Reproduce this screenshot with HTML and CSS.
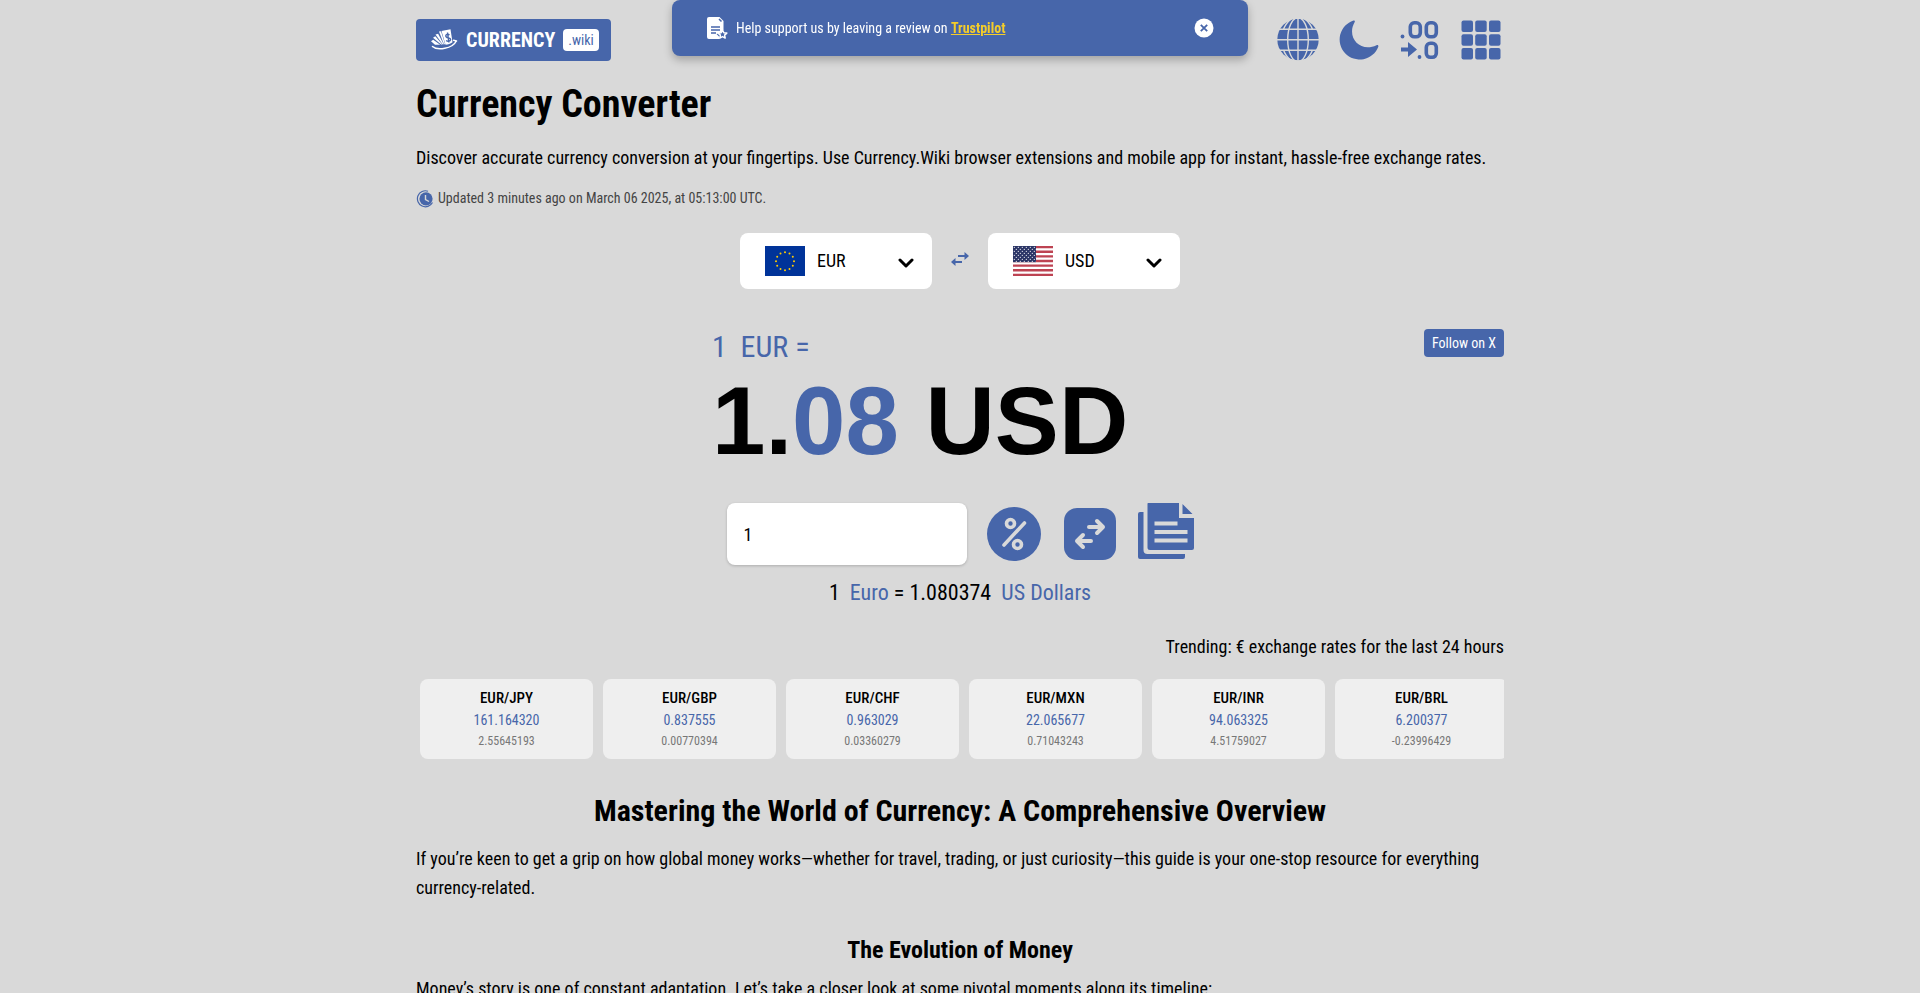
FILE: index.html
```html
<!DOCTYPE html>
<html lang="en">
<head>
<meta charset="utf-8">
<meta name="viewport" content="width=device-width, initial-scale=1">
<title>Currency Converter</title>
<link rel="stylesheet" href="styles.css">
</head>
<body>
<aside class="banner">
  <svg class="banner-icon" viewBox="0 0 22 24" aria-hidden="true"><path fill="#fff" d="M3 1h10.500l4 4v9l-1 0-2 3-4 1 3 3v2H3a2 2 0 0 1-2-2V3a2 2 0 0 1 2-2z"/><path fill="none" stroke="#4766aa" stroke-width="1.500" d="M5 11h9M5 14h9M5 17h5M13 3l2.500 2.500"/><path fill="#4766aa" stroke="#fff" stroke-width="1.500" stroke-linejoin="round" d="M16.500 14l1.300 2.700 3 .4-2.200 2 .6 3-2.700-1.500-2.700 1.500.6-3-2.200-2 3-.4z"/></svg>
  <p class="banner-text">Help support us by leaving a review on <a class="banner-link" href="#">Trustpilot</a></p>
  <button class="banner-close" type="button" aria-label="Close"><svg viewBox="0 0 20 20"><circle cx="10" cy="10" r="9.500" fill="#fff"/><path d="M6.800 6.800l6.400 6.400M13.200 6.800l-6.400 6.400" stroke="#4766aa" stroke-width="1.800"/></svg></button>
</aside>
<div class="container">
  <header class="topbar">
    <a class="logo" href="#">
      <svg class="logo-icon" viewBox="0 0 28 24" aria-hidden="true"><g fill="#fff"><path d="M11.500 3l9-1.700 2 13c-2 1.700-4.500 2.300-7 2.500z"/><path d="M9 3.500l2-.3 4 12.800-1 .6z"/><path d="M5.500 6.500l2.600-.8 5.600 10.500-1 .2z"/><path d="M3 9.800l2.300-1.500 7 8.200-1.200.1z"/><path d="M1 13.200l2.200-1.500 7 5H5z"/></g><path fill="none" stroke="#fff" stroke-width="1.500" stroke-linecap="round" d="M2.500 18.500c5 4.500 20 2 23.500-5M26.500 13l-3-.8"/><path fill="none" stroke="#4766aa" stroke-width="1.400" d="M19.500 6.800c-2.800-1.600-4.600.8-3.200 2.200s4.300.2 4.300 2.600c-.3 2-2.900 2.200-4.400.8M17.500 4.500l1.400 10"/></svg>
      <span class="logo-name">CURRENCY</span><span class="logo-tag">.wiki</span>
    </a>
    <nav class="tools" aria-label="Tools">
      <button class="tool" type="button" aria-label="Language"><svg viewBox="0 0 42 42"><circle cx="21" cy="20.500" r="20.700" fill="#4766aa"/><g fill="none" stroke="#d9d9d9" stroke-width="1.400"><path d="M21 0v42M0 20.700h42M2 10.200h38M2 31.300h38"/><ellipse cx="21" cy="20.700" rx="10.300" ry="22"/><path d="M14 0C10.500 3 8 6 6.500 10.500M28 0c3.500 3 6 6 7.500 10.500M14 41.500c-3.500-3-6-6-7.500-10.500M28 41.500c3.500-3 6-6 7.500-10.500"/></g></svg></button>
      <button class="tool" type="button" aria-label="Dark mode"><svg viewBox="0 0 42 42"><path fill="#4766aa" d="M15.500 1.500c1-.3 1.700.6 1.200 1.500C8 18 22 34 38.500 26.200c1.200-.5 2.200.3 1.800 1.500A20 20 0 1 1 15.500 1.500z"/></svg></button>
      <button class="tool" type="button" aria-label="Decimal places"><svg viewBox="0 0 42 42"><g fill="none" stroke="#4766aa" stroke-width="3.600"><rect x="11.300" y="3.800" width="10" height="14" rx="4"/><rect x="27.300" y="3.800" width="10" height="14" rx="4"/><rect x="27.300" y="24.300" width="10" height="14" rx="4"/></g><circle cx="3.500" cy="17.500" r="1.900" fill="#4766aa"/><circle cx="20.500" cy="38" r="1.900" fill="#4766aa"/><path fill="#4766aa" d="M2 28.500h7V23l9 7.500L9 38v-5.500H2z"/></svg></button>
      <button class="tool" type="button" aria-label="Menu"><svg viewBox="0 0 42 42" fill="#4766aa"><rect x="1.500" y="1.500" width="11.500" height="11.500" rx="2"/><rect x="15.200" y="1.500" width="11.500" height="11.500" rx="2"/><rect x="29" y="1.500" width="11.500" height="11.500" rx="2"/><rect x="1.500" y="15.200" width="11.500" height="11.500" rx="2"/><rect x="15.200" y="15.200" width="11.500" height="11.500" rx="2"/><rect x="29" y="15.200" width="11.500" height="11.500" rx="2"/><rect x="1.500" y="29" width="11.500" height="11.500" rx="2"/><rect x="15.200" y="29" width="11.500" height="11.500" rx="2"/><rect x="29" y="29" width="11.500" height="11.500" rx="2"/></svg></button>
    </nav>
  </header>
  <main>
    <h1 class="title">Currency Converter</h1>
    <p class="lead">Discover accurate currency conversion at your fingertips. Use Currency.Wiki browser extensions and mobile app for instant, hassle-free exchange rates.</p>
    <p class="updated"><svg class="clock" viewBox="0 0 18 18" aria-hidden="true"><circle cx="10" cy="8.800" r="6.600" fill="#4766aa"/><path fill="none" stroke="#4766aa" stroke-width="1.200" d="M12 1.200A8 8 0 1 0 16.500 12.500"/><path fill="none" stroke="#d9d9d9" stroke-width="1.400" d="M9.500 5v4.500l3.500 2"/></svg>Updated 3 minutes ago on March 06 2025, at 05:13:00 UTC.</p>

    <div class="pair">
      <button class="currency" type="button">
        <svg class="flag" viewBox="0 0 40 30" aria-hidden="true"><rect width="40" height="30" fill="#039"/><g fill="#fc0"><circle cx="20" cy="6.200" r="1"/><circle cx="24.500" cy="7.400" r="1"/><circle cx="27.800" cy="10.700" r="1"/><circle cx="29" cy="15.200" r="1"/><circle cx="27.800" cy="19.700" r="1"/><circle cx="24.500" cy="23" r="1"/><circle cx="20" cy="24.200" r="1"/><circle cx="15.500" cy="23" r="1"/><circle cx="12.200" cy="19.700" r="1"/><circle cx="11" cy="15.200" r="1"/><circle cx="12.200" cy="10.700" r="1"/><circle cx="15.500" cy="7.400" r="1"/></g></svg>
        <span class="code">EUR</span>
        <svg class="chevron" viewBox="0 0 16 14" aria-hidden="true"><path fill="none" stroke="#000" stroke-width="3" stroke-linecap="round" stroke-linejoin="round" d="M2 6l6 6 6-6"/></svg>
      </button>
      <button class="swap" type="button" aria-label="Swap currencies"><svg viewBox="0 0 18 18"><path fill="#4766aa" d="M7 3h6.500V0L18 4l-4.500 4V5H7zM11 9H4.500V6L0 10l4.500 4v-3H11z"/></svg></button>
      <button class="currency" type="button">
        <svg class="flag" viewBox="0 0 40 30" aria-hidden="true"><defs><pattern id="stars" width="4" height="4" patternUnits="userSpaceOnUse"><circle cx="1.300" cy="1.300" r=".6" fill="#fff"/><circle cx="3.300" cy="3.300" r=".6" fill="#fff"/></pattern></defs><rect width="40" height="30" fill="#fff"/><path stroke="#b22234" stroke-opacity=".85" stroke-width="2.300" d="M0 1.150h40M0 5.770h40M0 10.380h40M0 15h40M0 19.620h40M0 24.230h40M0 28.850h40"/><rect width="23" height="16.150" fill="#2b3566"/><rect width="23" height="16.150" fill="url(#stars)"/></svg>
        <span class="code">USD</span>
        <svg class="chevron" viewBox="0 0 16 14" aria-hidden="true"><path fill="none" stroke="#000" stroke-width="3" stroke-linecap="round" stroke-linejoin="round" d="M2 6l6 6 6-6"/></svg>
      </button>
    </div>

    <section class="result">
      <div class="result-main">
        <p class="result-from">1&nbsp; EUR =</p>
        <p class="result-value">1.<span class="accent">08</span> USD</p>
      </div>
      <a class="follow" href="#">Follow on X</a>
    </section>

    <div class="amount-row">
      <input class="amount" type="text" value="1" aria-label="Amount">
      <div class="actions">
        <button class="action" type="button" aria-label="Percentage"><svg viewBox="0 0 56 62"><circle cx="28" cy="31" r="27" fill="#4766aa"/><g fill="none" stroke="#d9d9d9" stroke-width="3.600"><path stroke-linecap="round" d="M38.500 20L18 42"/><circle cx="24.500" cy="20.500" r="4"/><circle cx="31.500" cy="41.500" r="4"/></g></svg></button>
        <button class="action" type="button" aria-label="Reverse"><svg viewBox="0 0 56 62"><rect x="2" y="5" width="52" height="52" rx="13" fill="#4766aa"/><path fill="none" stroke="#d9d9d9" stroke-width="4" stroke-linecap="round" stroke-linejoin="round" d="M27 24h14M35 18l6 6-6 6M29 38H15M21 32l-6 6 6 6"/></svg></button>
        <button class="action" type="button" aria-label="Copy"><svg viewBox="0 0 56 62"><path fill="#4766aa" d="M10 0h31v15h15v30a2 2 0 0 1-2 2H12a2.500 2.500 0 0 1-2.500-2.500V.5zM44.500 1v10h10z"/><path fill="#4766aa" d="M0 11a2 2 0 0 1 2-2h3.500v38a4 4 0 0 0 4 4H47v3a2 2 0 0 1-2 2H2a2 2 0 0 1-2-2z"/><path stroke="#d9d9d9" stroke-width="3.800" d="M16.500 20.500h23M16.500 29h33M16.500 37.500h33"/></svg></button>
      </div>
    </div>

    <p class="summary">1&nbsp; <a class="accent" href="#">Euro</a> = 1.080374&nbsp; <a class="accent" href="#">US Dollars</a></p>

    <section class="trending">
      <p class="trending-title">Trending: € exchange rates for the last 24 hours</p>
      <div class="rates">
        <article class="rate"><span class="rate-pair">EUR/JPY</span><span class="rate-value">161.164320</span><span class="rate-change">2.55645193</span></article>
        <article class="rate"><span class="rate-pair">EUR/GBP</span><span class="rate-value">0.837555</span><span class="rate-change">0.00770394</span></article>
        <article class="rate"><span class="rate-pair">EUR/CHF</span><span class="rate-value">0.963029</span><span class="rate-change">0.03360279</span></article>
        <article class="rate"><span class="rate-pair">EUR/MXN</span><span class="rate-value">22.065677</span><span class="rate-change">0.71043243</span></article>
        <article class="rate"><span class="rate-pair">EUR/INR</span><span class="rate-value">94.063325</span><span class="rate-change">4.51759027</span></article>
        <article class="rate"><span class="rate-pair">EUR/BRL</span><span class="rate-value">6.200377</span><span class="rate-change">-0.23996429</span></article>
      </div>
    </section>

    <article class="guide">
      <h2 class="guide-title">Mastering the World of Currency: A Comprehensive Overview</h2>
      <p class="guide-text">If you’re keen to get a grip on how global money works—whether for travel, trading, or just curiosity—this guide is your one-stop resource for everything currency-related.</p>
      <h3 class="guide-subtitle">The Evolution of Money</h3>
      <p class="guide-text">Money’s story is one of constant adaptation. Let’s take a closer look at some pivotal moments along its timeline:</p>
    </article>
  </main>
</div>
</body>
</html>
```
FILE: styles.css
```css
* { box-sizing: border-box; }

body {
  margin: 0;
  background: #d9d9d9;
  color: #000;
  font-family: "Roboto Condensed", Roboto, sans-serif;
  font-size: 18px;
  line-height: 29px;
}

h1, h2, h3, p { margin: 0; }
a { color: inherit; text-decoration: none; }
svg { display: block; }

button {
  padding: 0;
  border: 0;
  background: none;
  color: inherit;
  font: inherit;
  cursor: pointer;
}

.accent { color: #4766aa; }

.container {
  max-width: 1120px;
  margin: 0 auto;
  padding: 0 16px;
}

.banner {
  position: fixed;
  top: 0;
  left: 50%;
  z-index: 10;
  display: flex;
  align-items: center;
  gap: 8px;
  width: 30%;
  min-width: 480px;
  height: 56px;
  padding: 0 34px;
  border-radius: 8px;
  background: #4766aa;
  box-shadow: 0 4px 8px rgba(0, 0, 0, .25);
  color: #fff;
  font-size: 14px;
  transform: translateX(-50%);
}
.banner-icon { width: 22px; height: 24px; }
.banner-text { flex: 1; }
.banner-link { color: #f4cd2a; font-weight: 700; text-decoration: underline; }
.banner-close svg { width: 20px; height: 20px; }

.topbar {
  display: flex;
  align-items: center;
  justify-content: space-between;
  height: 80px;
}

.logo {
  display: flex;
  align-items: center;
  height: 42px;
  padding: 0 12px 0 14px;
  border-radius: 4px;
  background: #4766aa;
  color: #fff;
}
.logo-icon { width: 28px; height: 24px; margin-right: 8px; }
.logo-name { font-size: 20px; font-weight: 700; }
.logo-tag {
  margin-left: 8px;
  padding: 0 5px;
  border-radius: 4px;
  background: #fff;
  color: #4766aa;
  font-size: 14px;
  line-height: 22px;
}

.tools { display: flex; gap: 19px; padding-right: 2px; }
.tool svg { width: 42px; height: 42px; }

.title { font-size: 38px; line-height: 48px; }
.lead { margin-top: 15px; }

.updated {
  display: flex;
  align-items: center;
  gap: 4px;
  margin-top: 12px;
  color: #444;
  font-size: 14px;
}
.clock { width: 18px; height: 18px; }

.pair {
  display: flex;
  align-items: center;
  justify-content: center;
  gap: 19px;
  margin-top: 20px;
}
.currency {
  display: flex;
  align-items: center;
  width: 192px;
  height: 56px;
  padding: 0 18px 0 25px;
  border-radius: 8px;
  background: #fff;
}
.flag { width: 40px; height: 30px; }
.code { flex: 1; margin-left: 12px; line-height: 28px; text-align: left; }
.chevron { width: 16px; height: 14px; }
.swap svg { width: 18px; height: 18px; }

.result {
  display: grid;
  grid-template-columns: 1fr 496px 1fr;
  align-items: start;
  margin-top: 40px;
}
.result-main { grid-column: 2; }
.result-from { color: #4766aa; font-size: 30px; line-height: 36px; }
.result-value {
  font-family: "Liberation Sans", Arial, sans-serif;
  font-size: 96px;
  font-weight: 700;
  line-height: 112px;
}
.follow {
  justify-self: end;
  padding: 0 8px;
  border-radius: 4px;
  background: #4766aa;
  color: #fff;
  font-size: 14px;
  line-height: 28px;
}

.amount-row {
  display: flex;
  align-items: center;
  justify-content: center;
  gap: 19px;
  margin-top: 26px;
}
.amount {
  width: 240px;
  height: 62px;
  padding: 0 17px;
  border: 0;
  border-radius: 8px;
  background: #fff;
  box-shadow: 0 1px 3px rgba(0, 0, 0, .2);
  color: #000;
  font: inherit;
}
.actions { display: flex; gap: 20px; }
.action svg { width: 56px; height: 62px; }

.summary { margin-top: 12px; font-size: 22px; line-height: 32px; text-align: center; }

.trending-title { margin-top: 23px; text-align: right; }
.rates {
  display: flex;
  gap: 10px;
  margin-top: 18px;
  padding-left: 4px;
  overflow: hidden;
}
.rate {
  display: flex;
  flex: 0 0 173px;
  flex-direction: column;
  align-items: center;
  height: 80px;
  padding-top: 8px;
  border-radius: 8px;
  background: #efefef;
  font-size: 15px;
  line-height: 22px;
}
.rate-pair { font-weight: 500; }
.rate-value { color: #4766aa; font-size: 14px; }
.rate-change { color: #777; font-size: 12px; line-height: 20px; }

.guide-title { margin-top: 32px; font-size: 30px; line-height: 40px; text-align: center; }
.guide-subtitle { margin-top: 32px; font-size: 24px; line-height: 32px; text-align: center; }
.guide-text { margin-top: 13px; }
.guide-subtitle + .guide-text { margin-top: 8px; }
```
